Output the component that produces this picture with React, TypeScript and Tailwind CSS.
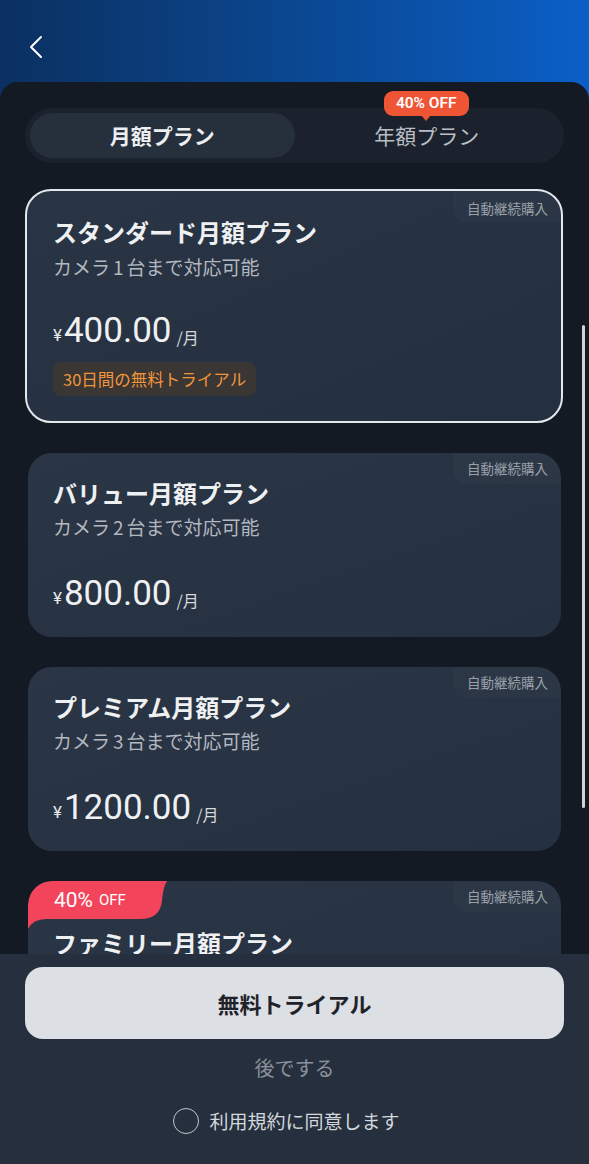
import { useState } from 'react';

type Plan = {
  id: string;
  name: string;
  cameras: string;
  price: string;
  trial?: boolean;
  ribbon?: boolean;
};

const plans: Plan[] = [
  { id: 'standard', name: 'スタンダード月額プラン', cameras: '1', price: '400.00', trial: true },
  { id: 'value', name: 'バリュー月額プラン', cameras: '2', price: '800.00' },
  { id: 'premium', name: 'プレミアム月額プラン', cameras: '3', price: '1200.00' },
  { id: 'family', name: 'ファミリー月額プラン', cameras: '4', price: '1600.00', ribbon: true },
];

const jp = { fontFamily: '"Noto Sans CJK JP", "Noto Sans", sans-serif' };
const num = { fontFamily: 'Roboto, "Noto Sans", sans-serif' };

const BackIcon = () => (
  <svg width="16" height="24" viewBox="0 0 16 24" fill="none">
    <path d="M13 2 L3 12 L13 22" stroke="#ffffff" strokeWidth="2" strokeLinecap="round" strokeLinejoin="round" />
  </svg>
);

const Ribbon = () => (
  <div className="relative h-[38px] w-[140px]">
    <svg className="absolute left-0 top-0" width="140" height="48" viewBox="0 0 140 48" fill="none">
      <path
        d="M0 24 A24 24 0 0 1 24 0 L139 0 Q135 6 134 20 Q132 38 112 38 L18 38 Q5 38 0 48 Z"
        fill="#f2445b"
      />
    </svg>
    <div className="relative flex h-[38px] items-center pl-[26px] text-white" style={num}>
      <span className="text-[21px] leading-none">40%</span>
      <span className="ml-[6px] text-[15px] leading-none">OFF</span>
    </div>
  </div>
);

function PlanCard({ plan, selected }: { plan: Plan; selected: boolean }) {
  return (
    <div
      className={
        selected
          ? 'relative -ml-[3px] -mr-[2px] rounded-[26px] border-2 border-[#e4e7eb] bg-gradient-to-br from-[#293445] to-[#243040] px-[26px] pb-[25px]'
          : 'relative overflow-hidden rounded-[24px] bg-gradient-to-br from-[#2a3546] to-[#253040] px-[25px] pb-[24px]'
      }
    >
      <div
        className={
          selected
            ? 'absolute right-0 top-0 rounded-bl-[14px] rounded-tr-[24px] bg-white/[0.02] pl-[14px] pr-[13px] pt-[9px] pb-[6px] text-[13.5px] leading-[16px] text-[#9aa0a9]'
            : 'absolute right-0 top-0 rounded-bl-[14px] rounded-tr-[24px] bg-white/[0.02] pl-[14px] pr-[13px] pt-[7px] pb-[8px] text-[13.5px] leading-[16px] text-[#9aa0a9]'
        }
      >
        自動継続購入
      </div>
      {plan.ribbon && (
        <div className="-ml-[25px]">
          <Ribbon />
        </div>
      )}
      <div
        className={
          plan.ribbon
            ? 'mt-[10px] text-[24px] font-bold leading-[28px] text-[#eef0f2]'
            : selected
              ? 'mt-[27px] text-[24px] font-bold leading-[28px] text-[#eef0f2]'
              : 'mt-[26px] text-[24px] font-bold leading-[28px] text-[#eef0f2]'
        }
      >
        {plan.name}
      </div>
      <div className={selected ? 'mt-[9px] text-[19px] leading-[24px] text-[#b3b8c0]' : 'mt-[8px] text-[19px] leading-[24px] text-[#b3b8c0]'}>
        カメラ<span className="mx-[3px]">{plan.cameras}</span>台まで対応可能
      </div>
      <div className={selected ? 'mt-[31px] flex h-[40px] items-end pb-[4px]' : 'mt-[34px] flex h-[40px] items-end pb-[4px]'}>
        <span className="mb-[2px] text-[17px] leading-none text-[#e6e8eb]" style={num}>¥</span>
        <span className="ml-[2px] text-[35px] leading-[30px] text-[#eef0f2]" style={num}>{plan.price}</span>
        <span className="mb-[1px] ml-[5px] text-[16px] leading-none text-[#d6d9dd]">/月</span>
      </div>
      {plan.trial && (
        <div className="mt-[12px] inline-flex h-[34px] items-center rounded-[8px] bg-[#3a3633] px-[10px] text-[16.5px] text-[#f0953c]">
          30日間の無料トライアル
        </div>
      )}
    </div>
  );
}

export default function App() {
  const [tab, setTab] = useState<'monthly' | 'yearly'>('monthly');
  const [selected, setSelected] = useState('standard');
  const [agreed, setAgreed] = useState(false);

  return (
    <div
      className="flex h-[1164px] w-full flex-col overflow-hidden bg-gradient-to-r from-[#0b3061] via-[#0a4790] to-[#0a5fc7]"
      style={jp}
    >
      <div className="flex h-[82px] shrink-0 items-center pl-[28px] pt-[12px]">
        <BackIcon />
      </div>

      <div className="relative flex min-h-0 flex-1 flex-col overflow-hidden rounded-t-[18px] bg-[#131a24]">
        <div className="shrink-0 px-[25px] pt-[26px]">
          <div className="grid h-[55px] grid-cols-2 rounded-full bg-[#1b222d] p-[5px]">
            <button
              onClick={() => setTab('monthly')}
              className={
                tab === 'monthly'
                  ? 'rounded-full bg-[#262f3c] text-[21px] font-bold text-[#eceef1]'
                  : 'rounded-full text-[21px] text-[#b9bdc4]'
              }
            >
              月額プラン
            </button>
            <button
              onClick={() => setTab('yearly')}
              className={
                tab === 'yearly'
                  ? 'relative rounded-full bg-[#262f3c] text-[21px] font-bold text-[#eceef1]'
                  : 'relative rounded-full text-[21px] text-[#b9bdc4]'
              }
            >
              年額プラン
              <span className="absolute left-1/2 top-[-22px] -ml-[43px] flex h-[25px] w-[85px] items-center justify-center rounded-[9px] bg-[#ef5435] text-[15.5px] font-semibold leading-none text-white" style={num}>
                40% OFF
                <span className="absolute bottom-[-5px] left-1/2 -ml-[5px] h-0 w-0 border-l-[5px] border-r-[5px] border-t-[6px] border-l-transparent border-r-transparent border-t-[#ef5435]" />
              </span>
            </button>
          </div>
        </div>

        <div className="min-h-0 flex-1 overflow-hidden px-[28px] pt-[26px]">
          <div className="flex flex-col gap-[30px]">
            {plans.map((p) => (
              <div key={p.id} onClick={() => setSelected(p.id)}>
                <PlanCard plan={p} selected={selected === p.id} />
              </div>
            ))}
          </div>
        </div>

        <div className="absolute right-[4px] top-[243px] h-[483px] w-[3px] rounded-full bg-[#cfd2d6]" />

        <div className="flex h-[210px] shrink-0 flex-col items-center bg-[#252f3d] px-[25px] pt-[13px]">
          <button className="h-[72px] w-full rounded-[18px] bg-[#dcdfe3] text-[22px] font-bold text-[#1f2329]">
            無料トライアル
          </button>
          <div className="mt-[17px] text-[20px] leading-[24px] text-[#8b919a]">後でする</div>
          <button onClick={() => setAgreed(!agreed)} className="mt-[28px] mr-[16px] flex items-center gap-[10px]">
            <span
              className={
                agreed
                  ? 'h-[26px] w-[26px] rounded-full border-[1.5px] border-[#c3c7cc] bg-[#c3c7cc]'
                  : 'h-[26px] w-[26px] rounded-full border-[1.5px] border-[#c3c7cc]'
              }
            />
            <span className="text-[19px] leading-[24px] text-[#d4d7db]">利用規約に同意します</span>
          </button>
        </div>
      </div>
    </div>
  );
}
